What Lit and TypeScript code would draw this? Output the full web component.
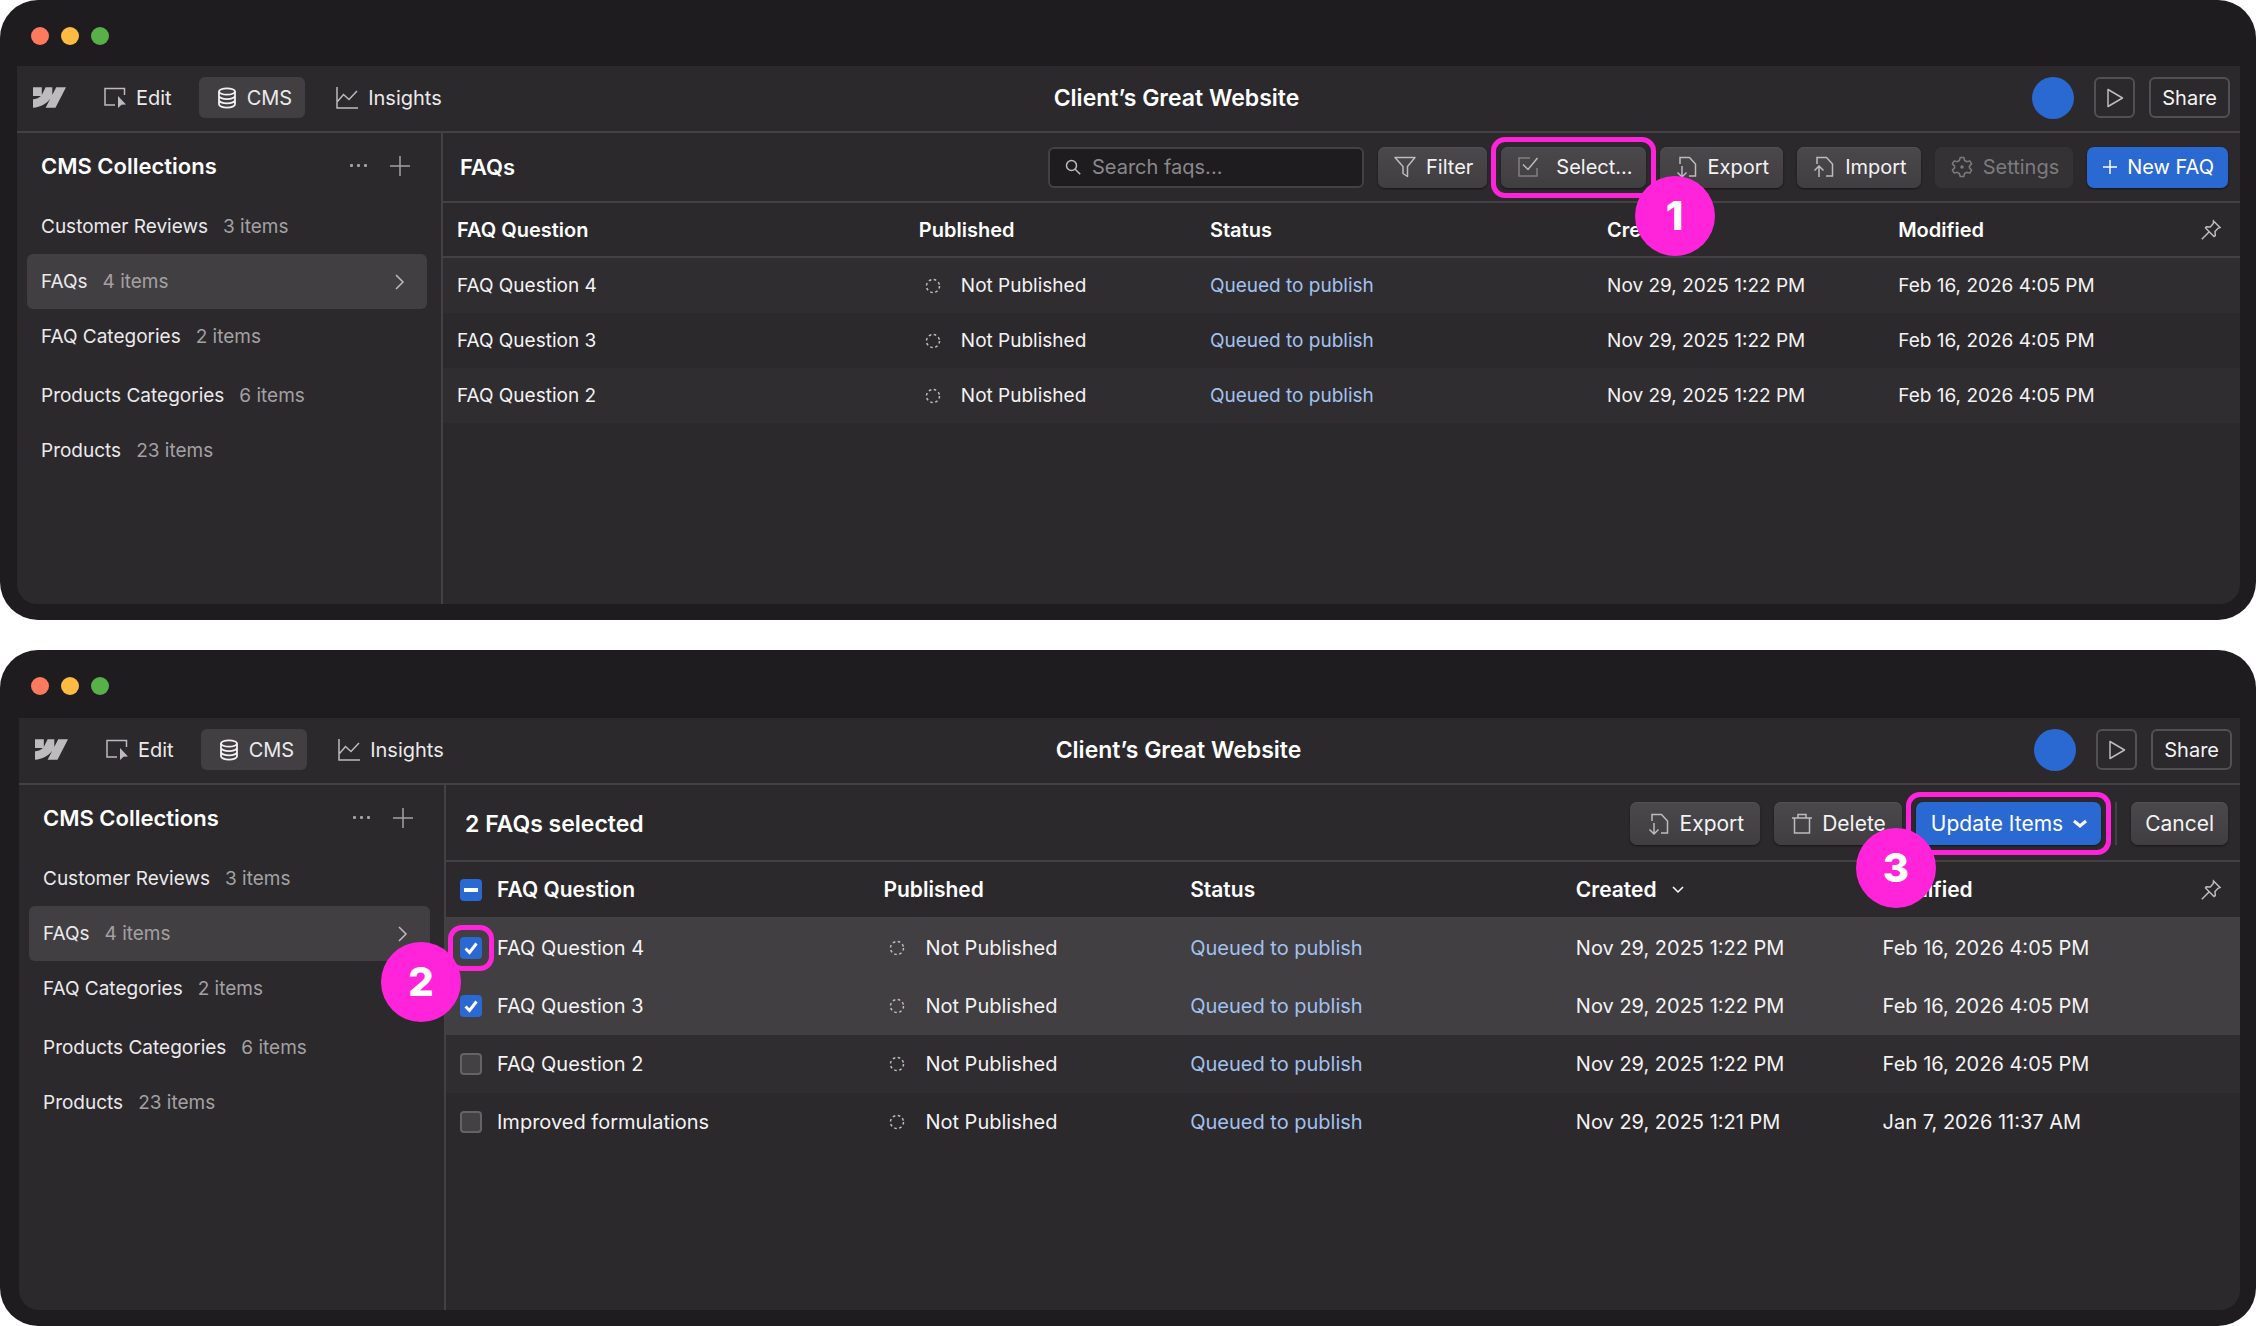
import { LitElement, html, css, svg, nothing, TemplateResult } from "lit";
import { customElement, property } from "lit/decorators.js";
import { classMap } from "lit/directives/class-map.js";

type Item = { title: string; created: string; modified: string; checked?: boolean };
type Collection = { name: string; count: string; active?: boolean };

const glyph = (w: number, h: number, body: unknown) => html`<svg
  width=${w}
  height=${h}
  viewBox="0 0 ${w} ${h}"
  fill="none"
  stroke="currentColor"
  stroke-width="1.5"
  aria-hidden="true"
>${body}</svg>`;

const icons = {
  logo: () => html`<svg width="33" height="21" viewBox="0 0 1080 674" fill="currentColor" role="img" aria-label="Home">
    <path d="M1080 0L735.386 673.684H411.695L555.916 394.481H549.445C430.464 548.934 252.942 650.61 0 673.684V398.344C0 398.344 161.813 388.787 256.939 288.776H0V0H288.771V237.515L295.252 237.489L413.254 0H631.644V236.009L638.126 235.999L760.555 0H1080Z" />
  </svg>`,
  edit: () => glyph(22, 22, svg`<path d="M11 18H1V1.500H20.500V8" /><path d="M14 9l8 8.500-4.500.3L14 21z" fill="currentColor" stroke="none" />`),
  database: () => glyph(20, 22, svg`<g stroke-width="1.800"><ellipse cx="10" cy="4.500" rx="8" ry="3.200" /><path d="M2 4.500v12.700c0 1.900 3.500 3.400 8 3.400s8-1.500 8-3.400V4.500M2 8.700c0 1.900 3.500 3.400 8 3.400s8-1.500 8-3.400M2 13c0 1.900 3.500 3.400 8 3.400s8-1.500 8-3.400" /></g>`),
  chart: () => glyph(22, 22, svg`<path d="M1 0v21h21M1.500 14.500l6-7 5.500 5 8-8.500" />`),
  play: () => glyph(18, 20, svg`<path d="M2 1.500v17L16.500 10z" stroke-linejoin="round" />`),
  dots: () => glyph(20, 20, svg`<g fill="currentColor" stroke="none"><rect x="1" y="8" width="3" height="3" rx="1" /><rect x="8" y="8" width="3" height="3" rx="1" /><rect x="15" y="8" width="3" height="3" rx="1" /></g>`),
  plus: (size = 20) => glyph(size, size, svg`<path d=${`M${size / 2} 0v${size}M0 ${size / 2}h${size}`} />`),
  right: () => glyph(10, 16, svg`<path d="M1 1l7 7-7 7" />`),
  search: () => glyph(16, 16, svg`<circle cx="6.500" cy="6.500" r="5" /><path d="M10.200 10.200l5 5" />`),
  filter: () => glyph(22, 22, svg`<path d="M1 1.500h20l-7.500 9V20.500l-4.500-3V10.500z" stroke-linejoin="round" />`),
  select: () => glyph(22, 22, svg`<path d="M13 2H2v18h18v-8" opacity=".5" /><path d="M6 8.500l5 5L20.500 2" />`),
  exporting: () => glyph(22, 22, svg`<path d="M4 8V1.500h9.500l6 6.500V20H13" /><path d="M6 10v11M1.500 16.500L6 21l4.500-4.500" />`),
  importing: () => glyph(22, 22, svg`<path d="M4 8V1.500h9.500l6 6.500V20H13" /><path d="M6 21V10M1.500 14.500L6 10l4.500 4.500" />`),
  gear: () => glyph(22, 22, svg`<path d="M9.200 1.500h3.600l.8 3 2.200 1.200 3-.8 1.800 3.100-2.200 2.100v1.800l2.200 2.100-1.800 3.100-3-.8-2.200 1.200-.8 3H9.200l-.8-3-2.200-1.200-3 .8L1.400 14l2.200-2.100v-1.800L1.400 8l1.800-3.100 3 .8 2.200-1.200z" stroke-linejoin="round" /><circle cx="11" cy="11" r="1" fill="currentColor" />`),
  trash: () => glyph(20, 22, svg`<path d="M0 5h20M6 5V1.500h8V5M2.500 5v15h15V5" />`),
  down: (w = 12) => glyph(w, 8, svg`<path d=${`M1 1l${w / 2 - 1} 5 ${w / 2 - 1}-5`} />`),
  pin: () => glyph(20, 20, svg`<path d="M12.500 1l6.500 6.500-2 .8-3 3.200.3 4.200-1.300.8L4.500 8l.8-1.300 4 .3 3-3.500zM8 12L.8 19.200" />`),
  pending: () => glyph(16, 16, svg`<circle cx="8" cy="8" r="6.500" stroke-dasharray="2.600 2.500" />`),
  check: () => glyph(22, 22, svg`<path d="M5.500 11.500l4 4 7-9" stroke-width="3" />`),
  dash: () => glyph(22, 22, svg`<path d="M4 11h14" stroke-width="4" />`),
};

const marker = (n: number, place: string) => html`<span class="ring ${place}"></span><span class="badge ${place}">${n}</span>`;

@customElement("site-window")
export class SiteWindow extends LitElement {
  @property({ type: Boolean, reflect: true }) selecting = false;
  @property({ attribute: false }) collections: Collection[] = [];
  @property({ attribute: false }) items: Item[] = [];

  static styles = css`
    :host {
      --edge: 17px;
      --chrome: 66px;
      --body: 538px;
      --bar-end: 10px;
      --side: 426px;
      --toolbar: 70px;
      --row: 55px;
      --head: 55px;
      --title: 22px;
      --label: 20px;
      --cell: 19px;
      --button: 41px;
      display: block;
      background: #1e1c1f;
      border-radius: 38px;
      padding: 0 16px 16px var(--edge);
      color: #f4f3f4;
      font-family: Inter, "Liberation Sans", sans-serif;
      font-size: 20px;
      line-height: 24px;
    }
    :host([selecting]) {
      --edge: 19px;
      --chrome: 68px;
      --body: 592px;
      --bar-end: 8px;
      --side: 427px;
      --toolbar: 77px;
      --row: 58px;
      --head: 57px;
      --title: 23px;
      --label: 21px;
      --cell: 20px;
      --button: 43px;
    }
    * { box-sizing: border-box; }
    svg { display: block; flex: none; overflow: visible; }
    button, input { font: inherit; color: inherit; margin: 0; }
    button { cursor: pointer; }
    .chrome {
      height: var(--chrome);
      display: flex;
      gap: 12px;
      padding: 27px 14px 0;
    }
    :host([selecting]) .chrome { padding-left: 12px; }
    .light { width: 18px; height: 18px; border-radius: 50%; }
    .close { background: #fd7a5e; }
    .minimize { background: #fdbb44; }
    .zoom { background: #59b04a; }
    .app {
      display: flex;
      flex-direction: column;
      min-height: var(--body);
      background: #2b292c;
      border-radius: 0 0 20px 20px;
    }
    .bar {
      display: grid;
      grid-template-columns: 1fr auto 1fr;
      align-items: center;
      height: 67px;
      border-bottom: 2px solid #434144;
      padding: 0 var(--bar-end) 2px 16px;
    }
    .left, .right, .tab { display: flex; align-items: center; }
    .left { color: #bdbbbd; }
    .right { justify-content: flex-end; }
    .tab {
      height: 41px;
      border: 0;
      border-radius: 6px;
      background: none;
      padding: 0 13px 0 18px;
      gap: 10px;
      color: #bdbbbd;
    }
    .tab span { color: #ebeaeb; }
    .tab.edit { margin: 0 14px 0 20px; }
    .tab.insights { margin-left: 13px; }
    .tab.current { background: #413f42; color: #f4f3f4; }
    .title { margin: 0; padding-left: 90px; font-size: 23px; font-weight: 600; color: #fff; }
    .avatar { width: 42px; height: 42px; border-radius: 50%; background: #2a69d1; margin-right: 20px; }
    .outline {
      display: flex;
      align-items: center;
      justify-content: center;
      height: 41px;
      padding: 0 11px;
      border: 2px solid #525053;
      border-radius: 6px;
      background: none;
    }
    .square { width: 41px; padding: 0; margin-right: 14px; color: #bdbbbd; }
    .columns { display: flex; flex: 1; }
    .side {
      flex: none;
      width: var(--side);
      border-right: 2px solid #434144;
      padding: 0 14px 0 10px;
    }
    .side-head { display: flex; align-items: center; height: 66px; padding: 0 17px 0 14px; color: #a3a1a3; }
    h2 { margin: 0 auto 0 0; font-size: 22px; line-height: 28px; font-weight: 600; color: #fff; }
    .toolbar h2 { font-size: var(--title); }
    .side-head button { border: 0; padding: 0; background: none; margin-left: 21px; }
    ul { list-style: none; margin: 0; padding: 0; font-size: 19px; }
    li:nth-child(4) { margin-top: 4px; }
    .collection {
      display: flex;
      align-items: center;
      gap: 15px;
      height: 55px;
      padding: 0 22px 0 14px;
      border-radius: 6px;
      color: #ebeaeb;
      text-decoration: none;
    }
    .collection.active { background: #413f42; }
    .collection svg { margin-left: auto; color: #bdbbbd; }
    .count { color: #a3a1a3; }
    .main { flex: 1; min-width: 0; }
    .toolbar {
      display: flex;
      align-items: center;
      gap: 14px;
      height: var(--toolbar);
      border-bottom: 2px solid #434144;
      padding: 0 12px 0 17px;
      font-size: var(--label);
    }
    :host([selecting]) .toolbar { padding: 2px 12px 0 19px; }
    .search {
      display: flex;
      align-items: center;
      gap: 11px;
      width: 316px;
      height: 41px;
      padding: 0 15px;
      border: 2px solid #434144;
      border-radius: 6px;
      background: #1e1c1f;
      color: #bdbbbd;
    }
    .search input { flex: 1; min-width: 0; border: 0; padding: 0; background: none; outline: 0; }
    .search input::placeholder { color: #8a888a; opacity: 1; }
    .button {
      position: relative;
      display: flex;
      align-items: center;
      gap: 10px;
      height: var(--button);
      padding: 0 14px 0 16px;
      border: 0;
      border-radius: 7px;
      background: linear-gradient(#4a484b, #403e41);
      box-shadow: 0 1px 2px #171518, inset 0 1px 0 #525053;
      white-space: nowrap;
    }
    :host([selecting]) .button { padding: 0 16px 0 18px; }
    .button svg { color: #bdbbbd; }
    .button.wide { gap: 17px; padding-right: 13px; }
    :host([selecting]) .button.plain { padding: 0 14px; }
    .button.primary { background: #2a69d1; box-shadow: 0 1px 2px #171518; color: #fff; }
    .button.primary svg { color: #fff; }
    .button:disabled { background: #343235; box-shadow: none; color: #7d7b7e; }
    .button:disabled svg { color: #7d7b7e; }
    :host([selecting]) .button.thick { padding: 0 14px 0 15px; }
    .button.thick svg { stroke-width: 3; }
    .rule { width: 2px; height: var(--button); background: #434144; }
    table { width: 100%; table-layout: fixed; border-collapse: separate; border-spacing: 0; font-size: var(--cell); }
    .c1 { width: 25.7%; }
    .c2 { width: 16.2%; }
    .c3 { width: 22.1%; }
    .c4 { width: 16.2%; }
    :host([selecting]) .c1 { width: 23.6%; }
    :host([selecting]) .c2 { width: 17.1%; }
    :host([selecting]) .c3 { width: 21.5%; }
    :host([selecting]) .c4 { width: 17.1%; }
    th, td { padding: 0 14px; text-align: left; white-space: nowrap; }
    th { height: var(--head); border-bottom: 2px solid #434144; font-size: var(--label); font-weight: 600; color: #fff; }
    td { height: var(--row); }
    tbody tr:nth-child(odd) { background: #2f2d30; }
    tbody tr.chosen { background: #413f42; }
    .flow { display: flex; align-items: center; gap: 15px; }
    .flow.state { padding-left: 6px; gap: 20px; }
    .flow.state svg, .flow.last svg { color: #bdbbbd; }
    .flow.last { justify-content: space-between; padding-right: 5px; }
    .status { color: #a3c1ee; }
    .box { position: relative; display: block; width: 22px; height: 22px; flex: none; color: #fff; }
    .box input {
      display: block;
      appearance: none;
      width: 22px;
      height: 22px;
      border: 2px solid #656366;
      border-radius: 4px;
      background: #434144;
    }
    .box input:checked, .box input:indeterminate { border: 0; background: #2a69d1; }
    .box svg { position: absolute; inset: 0; pointer-events: none; }
    .ring {
      position: absolute;
      z-index: 1;
      inset: -10px;
      border: 5px solid #ff24d9;
      border-radius: 14px;
      pointer-events: none;
    }
    .ring.corner { inset: -12px; }
    .badge {
      position: absolute;
      z-index: 2;
      width: 80px;
      height: 80px;
      border-radius: 50%;
      background: #ff24d9;
      color: #fff;
      font-size: 40px;
      line-height: 80px;
      font-weight: 800;
      text-align: center;
    }
    .badge.after { right: -69px; top: 29px; }
    .badge.before { left: -60px; top: 26px; }
    .badge.corner { left: -79px; top: 5px; }
  `;

  private box(label: string, on: boolean, mixed = false, mark?: TemplateResult) {
    return html`<span class="box"
      ><input type="checkbox" aria-label=${label} .checked=${on} .indeterminate=${mixed} />${mixed
        ? icons.dash()
        : on
          ? icons.check()
          : nothing}${mark ?? nothing}</span
    >`;
  }

  private browseTools() {
    return html`
      <h2>FAQs</h2>
      <label class="search">${icons.search()}<input type="text" aria-label="Search faqs" placeholder="Search faqs..." /></label>
      <button class="button">${icons.filter()}Filter</button>
      <button class="button wide">${icons.select()}Select...${marker(1, "after")}</button>
      <button class="button">${icons.exporting()}Export</button>
      <button class="button">${icons.importing()}Import</button>
      <button class="button" disabled>${icons.gear()}Settings</button>
      <button class="button primary">${icons.plus(14)}New FAQ</button>
    `;
  }

  private selectTools() {
    return html`
      <h2>2 FAQs selected</h2>
      <button class="button">${icons.exporting()}Export</button>
      <button class="button">${icons.trash()}Delete</button>
      <button class="button primary thick">Update Items ${icons.down(14)}${marker(3, "before")}</button>
      <span class="rule"></span>
      <button class="button plain">Cancel</button>
    `;
  }

  private row(item: Item, index: number) {
    return html`<tr class=${classMap({ chosen: !!item.checked })}>
      <td>
        <div class="flow">
          ${this.selecting ? this.box(item.title, !!item.checked, false, index === 0 ? marker(2, "corner") : undefined) : nothing}
          ${item.title}
        </div>
      </td>
      <td><div class="flow state">${icons.pending()}Not Published</div></td>
      <td class="status">Queued to publish</td>
      <td>${item.created}</td>
      <td>${item.modified}</td>
    </tr>`;
  }

  render() {
    return html`
      <div class="chrome">
        <span class="light close"></span><span class="light minimize"></span><span class="light zoom"></span>
      </div>
      <div class="app">
        <header class="bar">
          <nav class="left">
            ${icons.logo()}
            <button class="tab edit">${icons.edit()}<span>Edit</span></button>
            <button class="tab current">${icons.database()}<span>CMS</span></button>
            <button class="tab insights">${icons.chart()}<span>Insights</span></button>
          </nav>
          <h1 class="title">Client’s Great Website</h1>
          <div class="right">
            <span class="avatar"></span>
            <button class="outline square" aria-label="Preview">${icons.play()}</button>
            <button class="outline">Share</button>
          </div>
        </header>
        <div class="columns">
          <aside class="side">
            <div class="side-head">
              <h2>CMS Collections</h2>
              <button aria-label="More">${icons.dots()}</button>
              <button aria-label="Add collection">${icons.plus()}</button>
            </div>
            <ul>
              ${this.collections.map(
                (c) => html`<li>
                  <a href="#" class=${classMap({ collection: true, active: !!c.active })}
                    ><span>${c.name}</span><span class="count">${c.count}</span>${c.active ? icons.right() : nothing}</a
                  >
                </li>`
              )}
            </ul>
          </aside>
          <main class="main">
            <div class="toolbar">${this.selecting ? this.selectTools() : this.browseTools()}</div>
            <table>
              <colgroup>
                <col class="c1" /><col class="c2" /><col class="c3" /><col class="c4" /><col />
              </colgroup>
              <thead>
                <tr>
                  <th>
                    <div class="flow">${this.selecting ? this.box("Select all", false, true) : nothing}FAQ Question</div>
                  </th>
                  <th>Published</th>
                  <th>Status</th>
                  <th><div class="flow">Created${icons.down()}</div></th>
                  <th><div class="flow last">Modified${icons.pin()}</div></th>
                </tr>
              </thead>
              <tbody>
                ${this.items.map((item, i) => this.row(item, i))}
              </tbody>
            </table>
          </main>
        </div>
      </div>
    `;
  }
}

@customElement("app-root")
export class AppRoot extends LitElement {
  static styles = css`
    :host {
      display: flex;
      flex-direction: column;
      gap: 30px;
      background: #fff;
    }
  `;

  private collections: Collection[] = [
    { name: "Customer Reviews", count: "3 items" },
    { name: "FAQs", count: "4 items", active: true },
    { name: "FAQ Categories", count: "2 items" },
    { name: "Products Categories", count: "6 items" },
    { name: "Products", count: "23 items" },
  ];

  private items: Item[] = [
    { title: "FAQ Question 4", created: "Nov 29, 2025 1:22 PM", modified: "Feb 16, 2026 4:05 PM", checked: true },
    { title: "FAQ Question 3", created: "Nov 29, 2025 1:22 PM", modified: "Feb 16, 2026 4:05 PM", checked: true },
    { title: "FAQ Question 2", created: "Nov 29, 2025 1:22 PM", modified: "Feb 16, 2026 4:05 PM" },
    { title: "Improved formulations", created: "Nov 29, 2025 1:21 PM", modified: "Jan 7, 2026 11:37 AM" },
  ];

  render() {
    return html`
      <site-window
        .collections=${this.collections}
        .items=${this.items.slice(0, 3).map((item) => ({ ...item, checked: false }))}
      ></site-window>
      <site-window selecting .collections=${this.collections} .items=${this.items}></site-window>
    `;
  }
}
